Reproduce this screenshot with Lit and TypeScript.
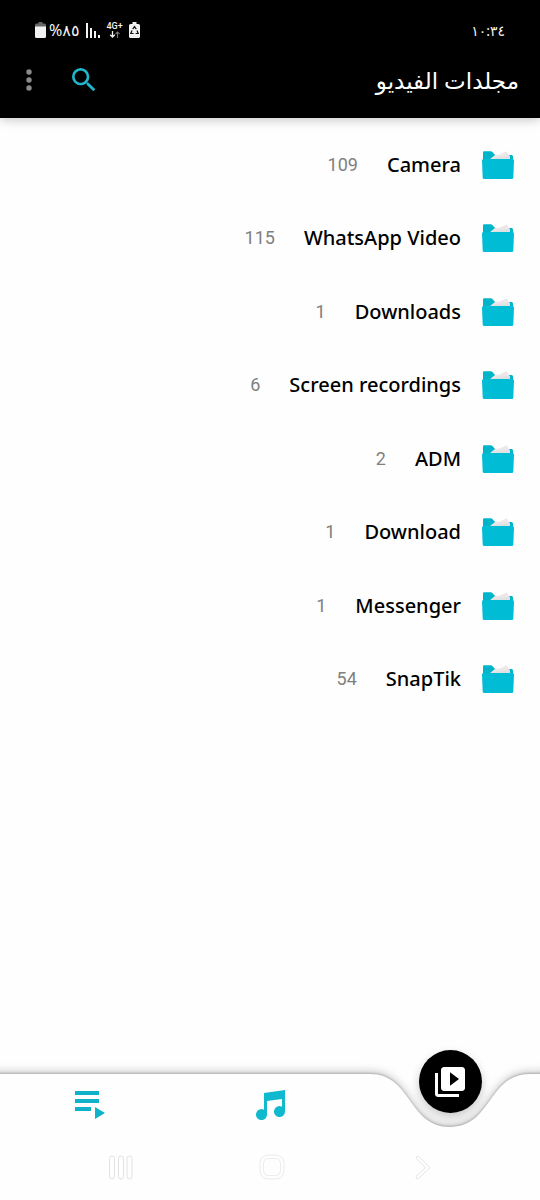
import { LitElement, html, css, svg } from "lit";
import { customElement, property } from "lit/decorators.js";

interface Folder {
  name: string;
  count: number;
}

const FOLDERS: Folder[] = [
  { name: "Camera", count: 109 },
  { name: "WhatsApp Video", count: 115 },
  { name: "Downloads", count: 1 },
  { name: "Screen recordings", count: 6 },
  { name: "ADM", count: 2 },
  { name: "Download", count: 1 },
  { name: "Messenger", count: 1 },
  { name: "SnapTik", count: 54 },
];

const base = css`
  :host,
  * {
    box-sizing: border-box;
  }
  button {
    display: flex;
    align-items: center;
    justify-content: center;
    margin: 0;
    padding: 0;
    border: 0;
    background: none;
    font: inherit;
    color: inherit;
    cursor: pointer;
  }
  svg {
    display: block;
    flex: none;
  }
`;

@customElement("status-bar")
export class StatusBar extends LitElement {
  static styles = [
    base,
    css`
      :host {
        display: flex;
        align-items: center;
        justify-content: space-between;
        height: 60px;
        padding: 0 35px;
        color: #f2f2f2;
        font-size: 16px;
      }
      time {
        font-size: 14px;
      }
      .indicators {
        display: flex;
        align-items: center;
        gap: 6px;
      }
      .battery {
        display: flex;
        align-items: center;
        gap: 3px;
      }
      .network {
        display: flex;
        flex-direction: column;
        align-items: center;
        font-family: Roboto, sans-serif;
        font-size: 9px;
        font-weight: 500;
        line-height: 9px;
      }
    `,
  ];

  render() {
    return html`
      <time>١٠:٣٤</time>
      <div class="indicators">
        <svg width="11" height="16" viewBox="0 0 11 16">
          <path fill="#f2f2f2" d="M3.5 0h4v2H9.5q1.5 0 1.5 1.5v11q0 1.5-1.5 1.5h-8Q0 16 0 14.5v-11Q0 2 1.5 2h2z" />
          <path fill="none" stroke="#111" stroke-width="1.2" d="M3.7 7.2 5.5 4.600l1.800 2.600M8 8.600l1.200 2.900H6.600M3 8.600l-1.200 2.900h2.800" />
        </svg>
        <div class="network" dir="ltr">
          <span>4G+</span>
          <svg width="12" height="7" viewBox="0 0 12 7">
            <path fill="none" stroke="#f2f2f2" stroke-width="1.3" d="M3.5 0v6M1.2 3.7l2.300 2.300 2.300-2.300" />
            <path fill="none" stroke="#777" stroke-width="1.1" d="M8.5 7V1M6.500 3l2-2 2 2" />
          </svg>
        </div>
        <svg width="15" height="15" viewBox="0 0 15 15" fill="#f2f2f2">
          <path d="M1 0h2v15H1zM5 5h2v10H5zM9 8h2v7H9zM13 12h2v3h-2z" />
        </svg>
        <div class="battery">
          <span>٨٥%</span>
          <svg width="11" height="16" viewBox="0 0 11 16">
            <path fill="#666" d="M3.5 0h4v1.5H9.5Q11 1.5 11 3v3H0V3q0-1.500 1.500-1.500h2z" />
            <path fill="#f2f2f2" d="M0 4.5h11v10q0 1.500-1.500 1.500h-8Q0 16 0 14.500z" />
          </svg>
        </div>
      </div>
    `;
  }
}

@customElement("title-bar")
export class TitleBar extends LitElement {
  static styles = [
    base,
    css`
      :host {
        display: flex;
        align-items: center;
        justify-content: space-between;
        height: 58px;
        padding: 0 21px 18px 13px;
        color: #fff;
      }
      h1 {
        margin: 0;
        font-size: 23px;
        font-weight: 400;
        line-height: 30px;
      }
      .actions {
        display: flex;
        align-items: center;
        gap: 23px;
      }
      .actions button {
        width: 32px;
        height: 32px;
      }
    `,
  ];

  render() {
    return html`
      <h1>مجلدات الفيديو</h1>
      <div class="actions">
        <button aria-label="بحث">
          <svg width="32" height="32" viewBox="0 0 24 24" fill="#21b6cb">
            <path d="M15.5 14h-.79l-.28-.27A6.471 6.471 0 0 0 16 9.5 6.5 6.5 0 1 0 9.5 16c1.610 0 3.090-.59 4.230-1.570l.27.28v.79l5 4.990L20.490 19l-4.990-5zm-6 0C7.010 14 5 11.990 5 9.500S7.010 5 9.500 5 14 7.010 14 9.500 11.990 14 9.500 14z" />
          </svg>
        </button>
        <button aria-label="المزيد">
          <svg width="6" height="22" viewBox="0 0 6 22" fill="#8b8b8b">
            <circle cx="3" cy="3" r="2.7" />
            <circle cx="3" cy="11" r="2.7" />
            <circle cx="3" cy="19" r="2.7" />
          </svg>
        </button>
      </div>
    `;
  }
}

@customElement("folder-row")
export class FolderRow extends LitElement {
  @property({ attribute: false }) folder!: Folder;

  static styles = [
    base,
    css`
      :host {
        display: flex;
        height: 100%;
      }
      .row {
        flex: 1;
        justify-content: flex-start;
        padding: 0 26px;
      }
      .name {
        margin-right: 21px;
        color: #000;
        font-family: "Noto Sans", sans-serif;
        font-size: 20px;
        font-weight: 500;
        line-height: 28px;
      }
      .count {
        margin-right: 29px;
        color: #808080;
        font-family: Roboto, sans-serif;
        font-size: 18px;
        line-height: 28px;
      }
    `,
  ];

  render() {
    return html`
      <button class="row">
        <svg width="32" height="28" viewBox="0 0 32 28">
          <path fill="#00b4c9" d="M1 10V1.5Q1 .3 2.2.3h6.600q1 0 1.800 1L14 5v5z" />
          <path fill="#00b4c9" d="M26 4h3.500Q31 4 31 5.500V10h-5z" />
          <path fill="#ece7e9" d="M7.500 8.500 13 4l5-.5L24.500.3 28 5.500v3z" />
          <path fill="#dfe1e2" d="m7.500 8.500 8-2.500L28 5v3.500z" />
          <path fill="#00bcd4" d="M0 9.500Q0 8 1.500 8h29Q32 8 32 9.500L31.300 26.500q-.1 1.500-1.500 1.500H2.200q-1.400 0-1.500-1.500z" />
        </svg>
        <span class="name" dir="ltr">${this.folder.name}</span>
        <span class="count">${this.folder.count}</span>
      </button>
    `;
  }
}

@customElement("tab-bar")
export class TabBar extends LitElement {
  static styles = [
    base,
    css`
      :host {
        display: block;
      }
      .tabs {
        display: grid;
        grid-template-columns: repeat(3, 1fr);
        justify-items: center;
        height: 63px;
      }
      .tab {
        width: 100%;
        height: 63px;
      }
      .active {
        width: 63px;
        height: 63px;
        margin-top: -23px;
        border-radius: 50%;
        background: #000;
        box-shadow: 0 4px 10px rgba(0, 0, 0, 0.22);
      }
    `,
  ];

  render() {
    return html`
      <nav class="tabs">
        <button class="active" aria-label="الفيديو">
          <svg width="36" height="36" viewBox="0 0 24 24" fill="#fff">
            <path d="M4 6H2v14c0 1.100.9 2 2 2h14v-2H4V6zm16-4H8c-1.100 0-2 .9-2 2v12c0 1.100.9 2 2 2h12c1.100 0 2-.9 2-2V4c0-1.100-.9-2-2-2zm-8 12.500v-9l6 4.500-6 4.500z" />
          </svg>
        </button>
        <button class="tab" aria-label="الموسيقى">
          <svg width="30" height="30" viewBox="0 0 30 30" fill="#11b9cf">
            <path d="M9 3 30 0v21.500A5.500 5.500 0 1 1 27 16.700V9L12 11v13.500A5.500 5.500 0 1 1 9 19.700z" />
          </svg>
        </button>
        <button class="tab" aria-label="قوائم التشغيل">
          <svg width="30" height="30" viewBox="0 0 30 30" fill="#11b2c9">
            <path d="M0 1h24v4H0zM0 9h24v4H0zM0 17h16v4H0zM20 17l10 6-10 6z" />
          </svg>
        </button>
      </nav>
    `;
  }
}

@customElement("system-nav")
export class SystemNav extends LitElement {
  static styles = [
    base,
    css`
      :host {
        display: grid;
        grid-template-columns: repeat(3, 1fr);
        height: 64px;
        padding: 0 42px 2px 45px;
      }
      svg {
        fill: none;
        stroke: #e2e2e2;
      }
    `,
  ];

  render() {
    const pill = (x: number) => svg`<rect x=${x} y="1" width="5" height="23" rx="2.5" />`;
    return html`
      <button aria-label="رجوع">
        <svg width="16" height="25" viewBox="0 0 16 25">
          <path stroke="#e6e6e6" stroke-linejoin="round" d="M1 3.5Q1 .5 3.500 1.500L15 12.500 3.500 23.500Q1 24.500 1 21.500L10.500 12.500z" />
        </svg>
      </button>
      <button aria-label="الرئيسية">
        <svg width="26" height="26" viewBox="0 0 26 26">
          <rect stroke="#ebebeb" x="1" y="1" width="24" height="24" rx="8" />
          <rect stroke="#ebebeb" x="4.5" y="4.5" width="17" height="17" rx="5" />
        </svg>
      </button>
      <button aria-label="التطبيقات الأخيرة">
        <svg width="24" height="25" viewBox="0 0 24 25">${[0.5, 9.5, 18].map(pill)}</svg>
      </button>
    `;
  }
}

@customElement("app-root")
export class AppRoot extends LitElement {
  static styles = css`
    :host {
      display: flex;
      flex-direction: column;
      min-height: 100vh;
      overflow: hidden;
      background: #fefefe;
      direction: rtl;
      font-family: "Noto Sans", "DejaVu Sans", sans-serif;
    }
    header {
      position: relative;
      background: #000;
      box-shadow: 0 2px 10px rgba(0, 0, 0, 0.22);
    }
    main {
      flex: 1;
    }
    .folders {
      display: grid;
      grid-auto-rows: 1fr;
      min-height: 588px;
      margin: 10px 0 0;
      padding: 0;
      list-style: none;
    }
    footer {
      position: relative;
      isolation: isolate;
    }
    .surface {
      position: absolute;
      inset: 0;
      z-index: -1;
      width: 100%;
      height: 100%;
      overflow: visible;
      filter: drop-shadow(0 -1px 1px rgba(0, 0, 0, 0.2))
        drop-shadow(0 -2px 4px rgba(0, 0, 0, 0.22));
    }
  `;

  render() {
    return html`
      <header>
        <status-bar></status-bar>
        <title-bar></title-bar>
      </header>
      <main>
        <ul class="folders">
          ${FOLDERS.map((folder) => html`<li><folder-row .folder=${folder}></folder-row></li>`)}
        </ul>
      </main>
      <footer>
        <svg class="surface" viewBox="0 0 540 127" preserveAspectRatio="none" aria-hidden="true">
          <path fill="#fefefe" d="M-20 1H370C412 1 408 54 450 54S488 1 530 1H560V147H-20z" />
        </svg>
        <tab-bar></tab-bar>
        <system-nav></system-nav>
      </footer>
    `;
  }
}
